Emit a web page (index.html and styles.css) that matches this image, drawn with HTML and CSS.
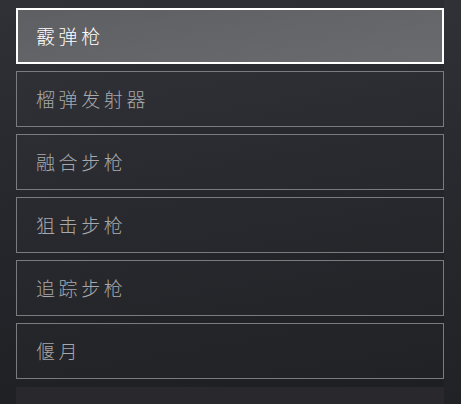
FILE: index.html
```html
<!DOCTYPE html>
<html lang="zh-CN">
<head>
    <meta charset="UTF-8">
    <meta name="viewport" content="width=device-width, initial-scale=1.0">
    <title>武器类型</title>
    <link rel="stylesheet" href="styles.css">
</head>
<body>
    <main class="panel">
        <ul class="weapon-list">
            <li class="weapon-item selected">霰弹枪</li>
            <li class="weapon-item">榴弹发射器</li>
            <li class="weapon-item">融合步枪</li>
            <li class="weapon-item">狙击步枪</li>
            <li class="weapon-item">追踪步枪</li>
            <li class="weapon-item">偃月</li>
            <li class="weapon-item more"></li>
        </ul>
        <div class="scroll-track"></div>
    </main>
</body>
</html>
```

FILE: styles.css
```css
:root {
    --text: #ffffff;
    --text-secondary: #a8a9ad;
    --line: #7a7b7f;
}

html, body {
    height: 100%;
}

body {
    margin: 0;
    font-family: "Noto Sans CJK SC", "Noto Sans", sans-serif;
    background: linear-gradient(170deg, #303136 0%, #26272c 45%, #1d1e21 100%);
    color: var(--text);
    overflow: hidden;
}

.panel {
    display: flex;
    height: 100%;
}

.weapon-list {
    list-style: none;
    margin: 0;
    padding: 8px 0 0 16px;
    width: 444px;
    height: 100%;
    box-sizing: border-box;
    overflow: hidden;
    display: flex;
    flex-direction: column;
    gap: 7px;
}

.weapon-item {
    height: 56px;
    box-sizing: border-box;
    border: 1px solid var(--line);
    padding: 0 0 1px 19px;
    display: flex;
    align-items: center;
    font-size: 19px;
    font-weight: 300;
    letter-spacing: 3.6px;
    color: var(--text-secondary);
    background: rgba(255, 255, 255, 0.015);
    flex-shrink: 0;
}

.weapon-item.selected {
    border: 2px solid #ffffff;
    padding-left: 18px;
    color: var(--text);
    background: linear-gradient(170deg, #5e5f63 0%, #6a6b6e 100%);
}

.weapon-item.more {
    border: none;
    background: #29292d;
    margin-top: 1px;
}

.scroll-track {
    flex: 1;
    background: rgba(255, 255, 255, 0.02);
}
```
